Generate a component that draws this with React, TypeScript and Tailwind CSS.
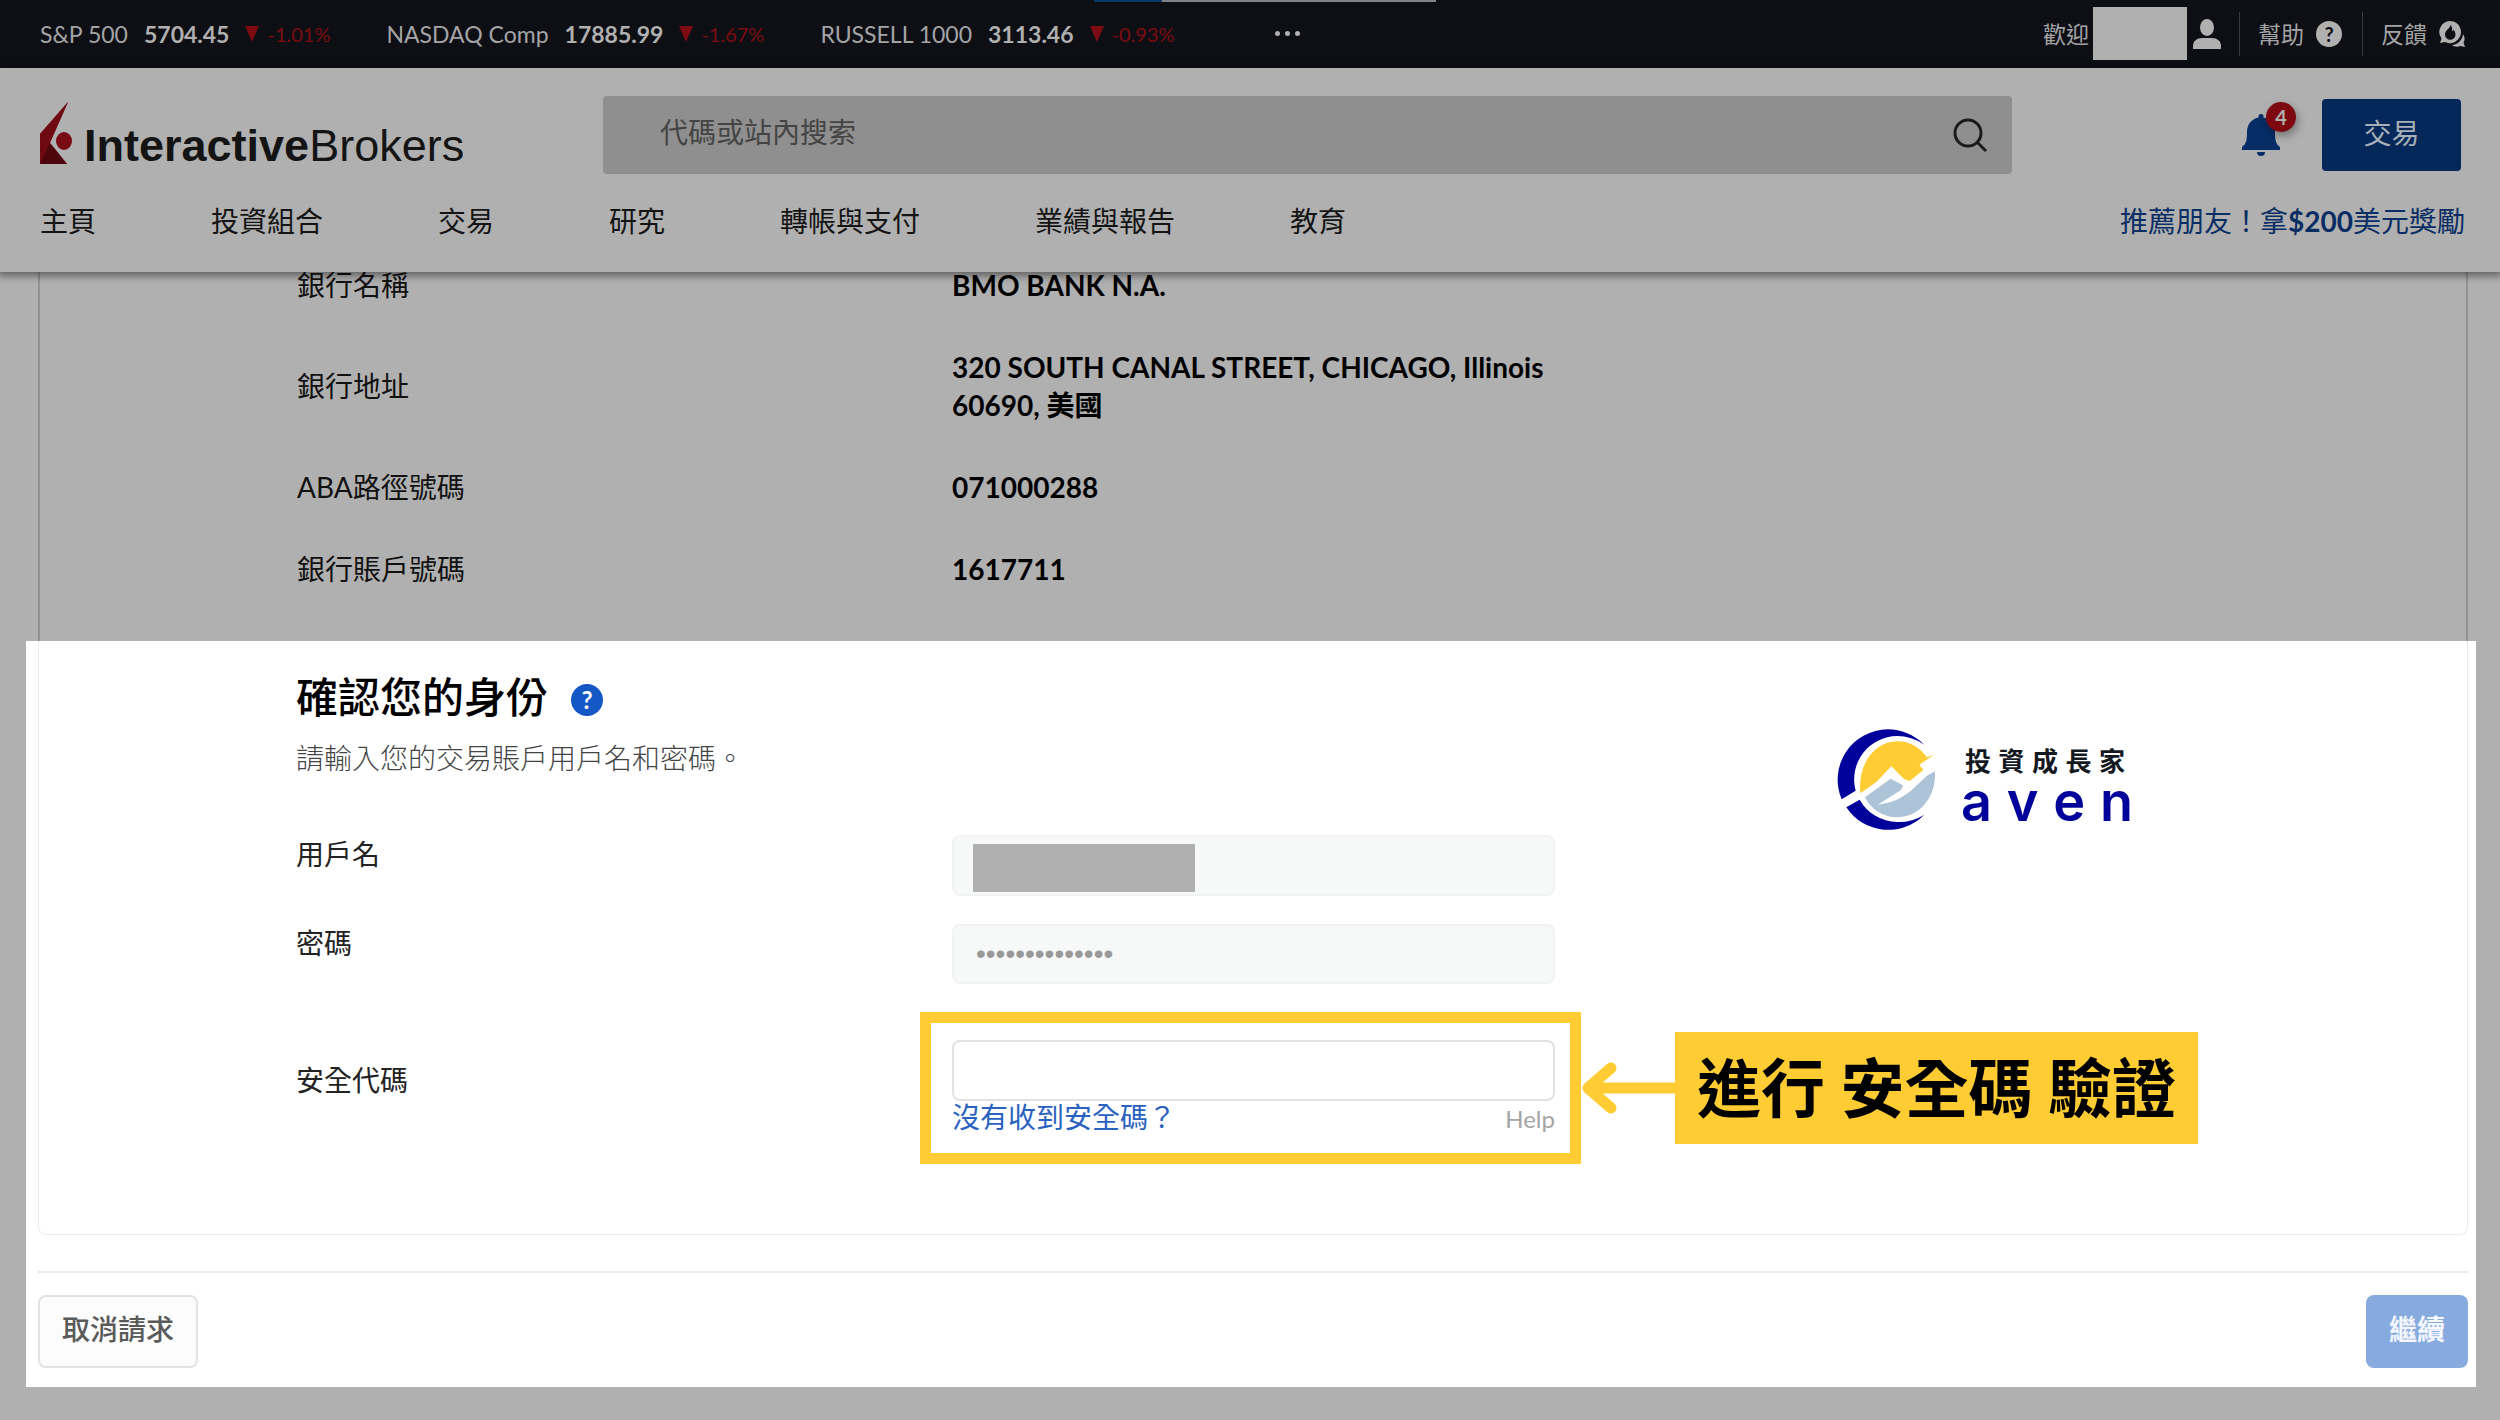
import React from "react";

const tickers = [
  { name: "S&P 500", value: "5704.45", change: "-1.01%" },
  { name: "NASDAQ Comp", value: "17885.99", change: "-1.67%" },
  { name: "RUSSELL 1000", value: "3113.46", change: "-0.93%" },
];

const navItems = ["主頁", "投資組合", "交易", "研究", "轉帳與支付", "業績與報告", "教育"];

const bankRows = [
  { label: "銀行名稱", value: "BMO BANK N.A." },
  { label: "銀行地址", value: "320 SOUTH CANAL STREET, CHICAGO, Illinois 60690, 美國" },
  { label: "ABA路徑號碼", value: "071000288" },
  { label: "銀行賬戶號碼", value: "1617711" },
];

function TopBar() {
  return (
    <div className="relative flex h-[68px] items-center justify-between bg-[#0e0f14] pr-[35px] pb-px pl-10 text-[23px] text-[#a3a4a6]">
      <div className="absolute top-0 left-[1094px] flex h-0.5 w-[342px] bg-[#808286]">
        <div className="w-1/5 bg-[#083a63]" />
      </div>
      <div className="flex items-center gap-14">
        {tickers.map((t) => (
          <div key={t.name} className="flex items-center gap-4">
            <span>{t.name}</span>
            <span className="font-bold text-[#b0b0b0]">{t.value}</span>
            <span className="flex items-center gap-2 text-xl text-[#7c0c12]">
              <svg className="h-4 w-3.5" viewBox="0 0 14 16" fill="currentColor" aria-hidden="true">
                <path d="M0 0h14L7 16z" />
              </svg>
              <span>{t.change}</span>
            </span>
          </div>
        ))}
        <button type="button" aria-label="更多" className="ml-11 flex gap-[5px]">
          <span className="size-[5px] rounded-full bg-[#b0b0b0]" />
          <span className="size-[5px] rounded-full bg-[#b0b0b0]" />
          <span className="size-[5px] rounded-full bg-[#b0b0b0]" />
        </button>
      </div>
      <div className="flex items-center">
        <span>歡迎</span>
        <span className="ml-1 h-[53px] w-[94px] bg-[#b0b0b0]" />
        <svg className="ml-1.5 h-[30px] w-7" viewBox="0 0 28 30" fill="#b0b0b0" aria-hidden="true">
          <ellipse cx="14" cy="8.500" rx="7" ry="8.500" />
          <path d="M0 30v-3c0-5 4-8 9-8h10c5 0 9 3 9 8v3z" />
        </svg>
        <span className="ml-[18px] h-11 w-px bg-[#3a3b3f]" />
        <a href="#help" className="ml-[18px] flex items-center gap-3">
          幫助
          <span className="flex size-[26px] items-center justify-center rounded-full bg-[#b0b0b0] text-xl font-bold text-[#0e0f14]">
            ?
          </span>
        </a>
        <span className="ml-5 h-11 w-px bg-[#3a3b3f]" />
        <a href="#feedback" className="ml-[18px] flex items-center gap-3">
          反饋
          <svg className="size-[26px]" viewBox="0 0 26 26" fill="#b0b0b0" aria-hidden="true">
            <path
              fillRule="evenodd"
              d="M11 0a11 11 0 0 1 8 18.500A11 11 0 0 1 6 21l-5 1 1.500-4.500A11 11 0 0 1 11 0zM11.500 4C11 8 6 9 6 13.500a5 5 0 0 0 10.500 0c0-2-.8-3.500-2-4.800-.2 1-.8 1.600-1.300 1.800C13.500 8 13 5.500 11.500 4z"
            />
            <path d="M24 13c2 3 2 6 .5 8.500L26 26l-4.500-1c-3 1.300-6.500.8-8.500-1 6-.5 10.500-5 11-11z" />
          </svg>
        </a>
      </div>
    </div>
  );
}

function Header() {
  return (
    <header className="relative z-10 bg-[#b0b0b0] pb-8 shadow-[0_2px_8px_2px_rgba(0,0,0,0.45)]">
      <div className="flex items-center pt-7 pr-[39px] pl-10">
        <a href="#home" aria-label="InteractiveBrokers" className="flex w-[563px] shrink-0 items-end">
          <svg className="mb-1 h-[62px] w-8" viewBox="0 0 32 62" aria-hidden="true">
            <path d="M28 0L0 32v30z" fill="#780a13" />
            <path d="M28 0L10 41l17 21H0V32z" fill="#6f0912" />
            <path d="M0 62l10-21 17 21z" fill="#4c060c" />
            <ellipse cx="24" cy="39" rx="8" ry="9" fill="#780a13" />
          </svg>
          <span className="ml-3 font-['Liberation_Sans'] text-[45px] leading-[44px] text-[#141414]">
            <b>Interactive</b>Brokers
          </span>
        </a>
        <form role="search" className="flex h-[78px] flex-1 items-center rounded bg-[#8f8f8f] pr-[25px] pl-[57px]">
          <input
            aria-label="代碼或站內搜索"
            placeholder="代碼或站內搜索"
            className="min-w-0 flex-1 bg-transparent pb-1.5 outline-none placeholder:text-[#444]"
          />
          <button type="button" aria-label="搜索">
            <svg className="size-[34px]" viewBox="0 0 34 34" fill="none" stroke="#1b1b1b" strokeWidth="3" aria-hidden="true">
              <circle cx="15" cy="15" r="13" />
              <path d="M24 24l9 9" />
            </svg>
          </button>
        </form>
        <div className="flex w-[449px] shrink-0 items-center justify-end gap-[42px]">
          <button type="button" aria-label="通知" className="relative">
            <svg className="h-[42px] w-[38px]" viewBox="0 0 38 42" fill="#062d66" aria-hidden="true">
              <path d="M16.500 2.500a2.500 2.500 0 0 1 5 0v1C29 5 33 11 33 18c0 9 1 12 5 15v3H0v-3c4-3 5-6 5-15C5 11 9 5 16.500 3.500z" />
              <path d="M15 38h8a4 4 0 0 1-8 0z" />
            </svg>
            <span className="absolute -top-3 left-6 flex size-[30px] items-center justify-center rounded-full bg-[#7d0810] text-xl font-bold text-[#b0b0b0] shadow-[2px_4px_8px_rgba(0,0,0,0.35)]">
              4
            </span>
          </button>
          <button type="button" className="h-[72px] w-[139px] rounded bg-[#05285a] pb-1 text-[#a9afb8]">
            交易
          </button>
        </div>
      </div>
      <nav className="flex items-center justify-between pt-7 pr-[35px] pl-10 text-[#141414]">
        <div className="flex gap-[115px]">
          {navItems.map((item) => (
            <a key={item} href="#nav">
              {item}
            </a>
          ))}
        </div>
        <a href="#refer" className="text-[#0a2d63]">
          推薦朋友！拿<b>$200</b>美元獎勵
        </a>
      </nav>
    </header>
  );
}

function BrandMark() {
  return (
    <div className="absolute top-[88px] left-[1811px] flex items-center gap-6">
      <svg className="h-[101px] w-[100px]" viewBox="110 85 300 303" aria-hidden="true">
        <path d="M372 132C340 102 303 86 262 86A151 151 0 0 0 124 296L166 270A130 130 0 0 1 290 106Q334 106 372 132z" fill="#00009a" />
        <path d="M138 320L178 297A131 131 0 0 0 290 364Q334 366 372 342A151 151 0 0 1 138 320z" fill="#00009a" />
        <path d="M180 278C172 190 222 122 292 122C328 122 358 140 380 170L401 162L357 192L369 208L328 241L312 236L273 197L228 244z" fill="#ffcc33" />
        <path d="M194 290L271 234L308 254L302 268L232 312C268 308 300 296 330 272L382 224L404 212C408 290 358 350 290 350C248 350 212 326 194 290z" fill="#adc3d8" />
      </svg>
      <div className="mt-3 w-[172px]">
        <p className="ml-1 w-[160px] text-[26px] leading-8 font-bold text-[#14181f] [text-align-last:justify]">投資成長家</p>
        <p className="flex justify-between font-[Inter] text-[54px] leading-[50px] font-semibold text-[#00009a]">
          <span>a</span>
          <span>v</span>
          <span>e</span>
          <span>n</span>
        </p>
      </div>
    </div>
  );
}

function Callout() {
  return (
    <div className="absolute top-5 left-full flex items-center">
      <svg className="h-[52px] w-[94px]" viewBox="0 0 94 52" fill="none" stroke="#ffcc33" strokeWidth="11" strokeLinecap="round" strokeLinejoin="round" aria-hidden="true">
        <path d="M30 6L7 26l23 20M8 26h92" />
      </svg>
      <strong className="flex h-28 w-[523px] items-center justify-center bg-[#ffcc33] text-[64px] whitespace-nowrap text-black">
        進行 安全碼 驗證
      </strong>
    </div>
  );
}

function IdentityPanel() {
  return (
    <section className="relative mr-6 ml-[26px] bg-white pr-2 pb-[19px] pl-3">
      <div className="rounded-b-lg border border-t-0 border-[#ebebeb] pt-[26px] pb-[97px] pl-[257px]">
        <div className="flex items-center gap-[23px]">
          <h2 className="text-[42px] leading-[60px] font-medium text-black">確認您的身份</h2>
          <button
            type="button"
            aria-label="說明"
            className="mt-1.5 flex size-8 items-center justify-center rounded-full bg-[#1557c4] text-2xl font-bold text-white"
          >
            ?
          </button>
        </div>
        <p className="mt-2.5 leading-[42px] font-light text-[#444]">請輸入您的交易賬戶用戶名和密碼。</p>
        <div className="mt-14 grid grid-cols-[656px_603px] text-[#222]">
          <label htmlFor="user" className="h-[89px]">
            用戶名
          </label>
          <div className="relative h-[89px]">
            <input id="user" disabled className="h-[61px] w-full rounded-lg border-2 border-[#f1f2f2] bg-[#f7f9f9] px-5" />
            <span className="absolute top-[9px] left-[21px] h-12 w-[222px] bg-[#b0b0b0]" />
          </div>
          <label htmlFor="pass" className="h-[116px]">
            密碼
          </label>
          <input
            id="pass"
            type="password"
            disabled
            defaultValue="abcdefghijklmn"
            className="h-[60px] w-full rounded-lg border-2 border-[#f1f2f2] bg-[#f7f9f9] px-[22px] font-['Liberation_Sans'] text-[#999]"
          />
          <label htmlFor="code" className="pt-[21px]">
            安全代碼
          </label>
          <div className="relative">
            <input id="code" className="h-[61px] w-full rounded-lg border-2 border-[#e2e2e2] bg-white px-5" />
            <div className="flex items-center justify-between">
              <a href="#resend" className="pb-1 leading-8 text-[#2a62c0]">
                沒有收到安全碼？
              </a>
              <a href="#code-help" className="text-2xl leading-8 text-[#a5a5a5]">
                Help
              </a>
            </div>
            <div className="pointer-events-none absolute -top-7 -right-[26px] -left-8 h-[152px] border-[11px] border-[#ffcc33]">
              <div className="absolute top-[-11px] right-[-11px]">
                <div className="relative w-0">
                  <Callout />
                </div>
              </div>
            </div>
          </div>
        </div>
      </div>
      <div className="mt-9 flex justify-between border-t-2 border-[#ebebeb] pt-[22px]">
        <button type="button" className="h-[73px] rounded-lg border-2 border-[#e2e2e2] bg-[#fcfcfc] px-[22px] pb-1.5 font-medium text-[#5a5a5a]">
          取消請求
        </button>
        <button type="button" className="h-[73px] rounded-lg bg-[#87aadf] px-[23px] pb-1.5 font-bold text-[#f4f7fd]">
          繼續
        </button>
      </div>
      <BrandMark />
    </section>
  );
}

export default function App() {
  return (
    <div className="min-h-screen bg-[#b0b0b0] font-[Lato,'Noto_Sans_CJK_TC',sans-serif] text-[28px] leading-[38px]">
      <TopBar />
      <Header />
      <main>
        <dl className="mr-8 ml-[38px] -mt-1.5 grid grid-cols-[655px_604px] items-center gap-y-11 border-x-2 border-[#929292] pb-[53px] pl-[257px]">
          {bankRows.map((row) => (
            <React.Fragment key={row.label}>
              <dt className="text-[#111]">{row.label}</dt>
              <dd className="font-bold text-black">{row.value}</dd>
            </React.Fragment>
          ))}
        </dl>
        <IdentityPanel />
      </main>
    </div>
  );
}
